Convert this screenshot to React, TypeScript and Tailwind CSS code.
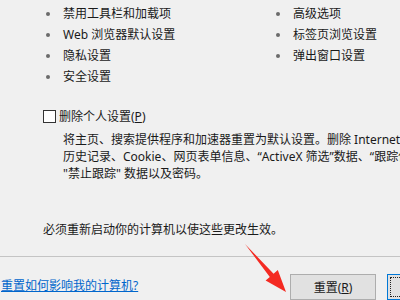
const font = { fontFamily: '"Noto Sans", "Noto Sans CJK SC", sans-serif' };

const left = ["禁用工具栏和加载项", "Web 浏览器默认设置", "隐私设置", "安全设置"];
const right = ["高级选项", "标签页浏览设置", "弹出窗口设置"];

const Bullet = ({ text }: { text: string }) => (
  <div className="flex items-center h-[21px]">
    <span className="w-[4px] h-[4px] rounded-full bg-[#6b6b6b] ml-[3px] mr-[13px] shrink-0" />
    <span className="whitespace-nowrap">{text}</span>
  </div>
);

const App = () => {
  return (
    <div
      className="relative w-[400px] h-[300px] overflow-hidden bg-[#f0f0f0] text-[12px] leading-[17px] text-[#1a1a1a]"
      style={font}
    >
      <div className="pl-[43px]">
        <div className="grid grid-cols-[230px_1fr] pt-[3px]">
          <div className="flex flex-col">
            {left.map((t) => (
              <Bullet key={t} text={t} />
            ))}
          </div>
          <div className="flex flex-col">
            {right.map((t) => (
              <Bullet key={t} text={t} />
            ))}
          </div>
        </div>

        <div className="flex items-center mt-[21px] h-[17px]">
          <span className="w-[13px] h-[13px] border border-[#333] bg-white shrink-0" />
          <span className="ml-[3px] whitespace-nowrap">
            删除个人设置(<span className="underline">P</span>)
          </span>
        </div>

        <div className="mt-[6px] pl-[20px] whitespace-nowrap">
          <div>将主页、搜索提供程序和加速器重置为默认设置。删除 Internet Explorer</div>
          <div>历史记录、Cookie、网页表单信息、“ActiveX 筛选”数据、“跟踪保护”列表、</div>
          <div>"禁止跟踪" 数据以及密码。</div>
        </div>

        <div className="mt-[39px] whitespace-nowrap">必须重新启动你的计算机以使这些更改生效。</div>
      </div>

      <div className="mt-[18px] h-px bg-[#c4c4c4]" />

      <div className="flex items-start pt-[17px]">
        <a className="ml-[1px] mt-[3px] text-[#0066cc] underline whitespace-nowrap shrink-0 cursor-pointer">
          重置如何影响我的计算机?
        </a>
        <button className="ml-auto w-[86px] h-[26px] shrink-0 border border-[#adadad] bg-[#e1e1e1] text-[12px]">
          重置(<span className="underline">R</span>)
        </button>
        <button className="ml-[11px] mr-[-73px] w-[86px] h-[26px] shrink-0 border border-[#0078d7] bg-[#e1e1e1] p-[2px]">
          <span className="block w-full h-full border border-dotted border-[#222]" />
        </button>
      </div>

      <svg className="absolute left-[240px] top-[240px]" width="60" height="60" viewBox="0 0 60 60">
        <polygon
          points="5,4 33.6,33.7 37.8,30.1 46,52 25.6,40.5 29.8,36.9"
          fill="#f42a22"
        />
      </svg>
    </div>
  );
};

export default App;
